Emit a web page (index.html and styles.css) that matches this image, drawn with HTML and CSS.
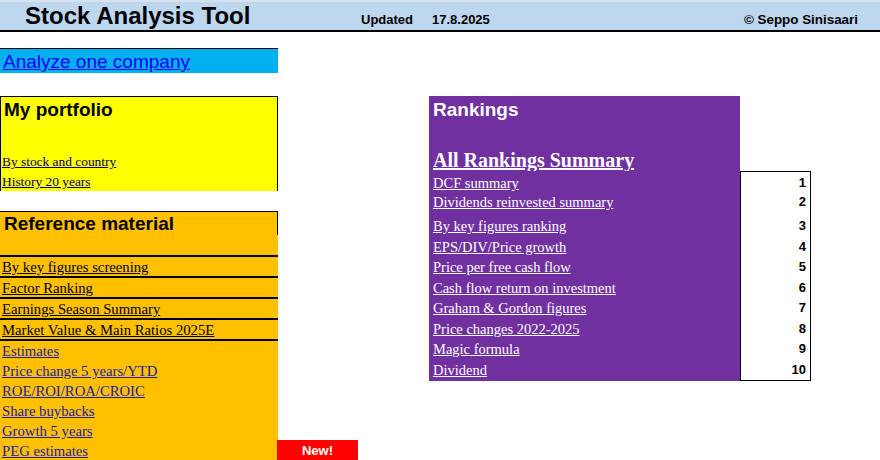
FILE: index.html
```html
<!DOCTYPE html>
<html>
<head>
    <link rel="stylesheet" href="styles.css">
</head>
<body>
    <div class="topbar">
        <div class="app-title">Stock Analysis Tool</div>
        <div class="meta">Updated</div>
        <div class="meta">17.8.2025</div>
        <div class="meta copy">© Seppo Sinisaari</div>
    </div>

    <div class="main">
        <div class="left">
            <div class="analyze"><a href="#">Analyze one company</a></div>

            <div class="portfolio">
                <div class="box-title">My portfolio</div>
                <div class="links">
                    <a href="#">By stock and country</a>
                    <a href="#">History 20 years</a>
                </div>
            </div>

            <div class="reference">
                <div class="ref-title">Reference material</div>
                <div class="ref-gap"></div>
                <div class="ref-row lined"><a href="#">By key figures screening</a></div>
                <div class="ref-row lined"><a href="#">Factor Ranking</a></div>
                <div class="ref-row lined"><a href="#">Earnings Season Summary</a></div>
                <div class="ref-row lined last"><a href="#">Market Value &amp; Main Ratios 2025E</a></div>
                <div class="ref-row"><a class="blue" href="#">Estimates</a></div>
                <div class="ref-row"><a class="blue" href="#">Price change 5 years/YTD</a></div>
                <div class="ref-row"><a class="blue" href="#">ROE/ROI/ROA/CROIC</a></div>
                <div class="ref-row"><a class="blue" href="#">Share buybacks</a></div>
                <div class="ref-row"><a class="blue" href="#">Growth 5 years</a></div>
                <div class="ref-row peg">
                    <a class="blue" href="#">PEG estimates</a>
                    <span class="badge">New!</span>
                </div>
            </div>
        </div>

        <div class="rankings">
            <div class="rank-head">
                <div class="box-title">Rankings</div>
                <a class="summary" href="#">All Rankings Summary</a>
            </div>
            <div class="rank-row first"><a href="#">DCF summary</a><span class="num">1</span></div>
            <div class="rank-row"><a href="#">Dividends reinvested summary</a><span class="num">2</span></div>
            <div class="rank-row spacer"><span></span><span class="num"></span></div>
            <div class="rank-row"><a href="#">By key figures ranking</a><span class="num">3</span></div>
            <div class="rank-row"><a href="#">EPS/DIV/Price growth</a><span class="num">4</span></div>
            <div class="rank-row"><a href="#">Price per free cash flow</a><span class="num">5</span></div>
            <div class="rank-row"><a href="#">Cash flow return on investment</a><span class="num">6</span></div>
            <div class="rank-row"><a href="#">Graham &amp; Gordon figures</a><span class="num">7</span></div>
            <div class="rank-row"><a href="#">Price changes 2022-2025</a><span class="num">8</span></div>
            <div class="rank-row"><a href="#">Magic formula</a><span class="num">9</span></div>
            <div class="rank-row last"><a href="#">Dividend</a><span class="num">10</span></div>
        </div>
    </div>
</body>
</html>
```

FILE: styles.css
```css
body {
    margin: 0;
    font-family: "Liberation Sans", Arial, sans-serif;
    background-color: #ffffff;
    color: #000;
}

.topbar {
    display: grid;
    grid-template-columns: 361px 71px 1fr auto;
    align-items: baseline;
    height: 28px;
    border-top: 2px solid #d6e2ee;
    background-color: #bdd7ee;
    border-bottom: 2px solid #000;
}

.app-title {
    padding-left: 25px;
    font-size: 24px;
    font-weight: bold;
    line-height: 28px;
}

.meta {
    font-size: 13px;
    font-weight: bold;
}

.copy {
    padding-right: 22px;
    font-size: 13.4px;
}

.main {
    display: flex;
    align-items: flex-start;
}

.left {
    width: 278px;
    padding-top: 16px;
}

.analyze {
    height: 24px;
    border-top: 1px solid #000;
    background-color: #00b0f0;
    line-height: 25px;
}

.analyze a {
    padding-left: 3px;
    font-size: 19px;
    color: #0000ff;
}

.box-title {
    padding-left: 4px;
    font-size: 19px;
    font-weight: bold;
    line-height: 22px;
}

.portfolio {
    margin-top: 23px;
    height: 94px;
    border-top: 1px solid #000;
    border-left: 1px solid #000;
    border-right: 1px solid #000;
    background-color: #ffff00;
}

.portfolio .box-title {
    padding-top: 2px;
    padding-left: 3px;
}

.links {
    display: flex;
    flex-direction: column;
    align-items: flex-start;
    margin-top: 30px;
}

.links a,
.ref-row a,
.rank-row a {
    font-family: "Liberation Serif", "Times New Roman", serif;
}

.links a {
    height: 20px;
    padding-left: 1px;
    font-size: 13.4px;
    line-height: 21px;
    color: #000066;
}

.reference {
    margin-top: 20px;
    border-top: 1px solid #000;
    background-color: #ffc000;
}

.ref-title {
    height: 23px;
    padding-left: 4px;
    border-right: 1px solid #000;
    font-size: 19px;
    font-weight: bold;
    line-height: 24px;
}

.ref-gap {
    height: 20px;
}

.ref-row {
    height: 20px;
    padding-left: 2px;
    line-height: 20px;
}

.ref-row.lined {
    height: 19px;
    line-height: 19px;
    border-top: 2px solid #000;
}

.ref-row.last {
    border-bottom: 2px solid #000;
}

.ref-row a {
    font-size: 14.7px;
    color: #000;
}

.ref-row a.blue {
    color: #1c1ca0;
}

.peg {
    position: relative;
}

.badge {
    position: absolute;
    left: 277px;
    top: -1px;
    width: 81px;
    height: 20px;
    background-color: #ff0000;
    color: #fff;
    font-size: 13px;
    font-weight: bold;
    text-align: center;
    line-height: 21px;
}

.rankings {
    width: 382px;
    margin-top: 64px;
    margin-left: 151px;
}

.rank-head {
    width: 311px;
    height: 75px;
    background-color: #7030a0;
    color: #fff;
}

.rank-head .box-title {
    padding-top: 3px;
}

.summary {
    display: inline-block;
    margin-top: 28px;
    padding-left: 4px;
    font-family: "Liberation Serif", "Times New Roman", serif;
    font-size: 20px;
    font-weight: bold;
    line-height: 22px;
    color: #fff;
}

.rank-row {
    display: grid;
    grid-template-columns: 311px 71px;
    height: 20.5px;
}

.rank-row a {
    padding-left: 4px;
    background-color: #7030a0;
    font-size: 14.5px;
    line-height: 22px;
    color: #fff;
}

.rank-row.first,
.rank-row:nth-child(3) {
    height: 20px;
}

.num {
    border-left: 1px solid #000;
    border-right: 1px solid #000;
    padding-right: 4px;
    font-size: 13px;
    font-weight: bold;
    line-height: 21px;
    text-align: right;
}

.rank-row.first .num {
    border-top: 1px solid #000;
}

.rank-row.first a {
    border-top: 1px solid #7030a0;
}

.rank-row.last .num {
    border-bottom: 1px solid #000;
}

.spacer {
    height: 4px !important;
}

.spacer span:first-child {
    background-color: #7030a0;
}
```
